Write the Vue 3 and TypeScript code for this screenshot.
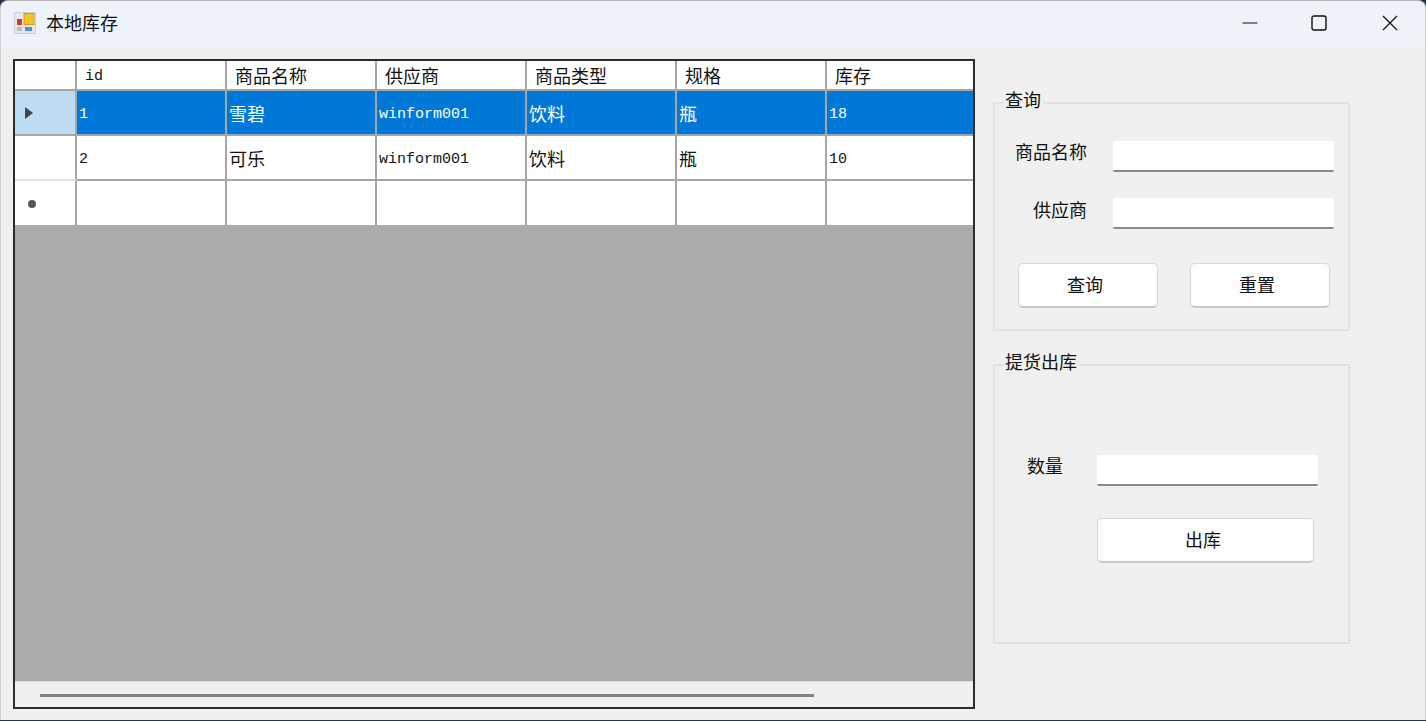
<script setup lang="ts">
interface Row { id: string; name: string; supplier: string; type: string; spec: string; stock: string }
const headers = ['id', '商品名称', '供应商', '商品类型', '规格', '库存']
const rows: Row[] = [
  { id: '1', name: '雪碧', supplier: 'winform001', type: '饮料', spec: '瓶', stock: '18' },
  { id: '2', name: '可乐', supplier: 'winform001', type: '饮料', spec: '瓶', stock: '10' },
]
</script>

<template>
  <div class="window">
    <header class="titlebar">
      <svg class="app-icon" width="22" height="22" viewBox="0 0 22 22">
        <rect x="0.5" y="0.5" width="21" height="21" fill="#e6e7ea" stroke="#cfd1d6" />
        <rect x="10" y="1.5" width="10" height="11" fill="#f4c526" stroke="#cf9d22" />
        <rect x="3" y="7" width="5" height="6" fill="#cf3a30" />
        <rect x="3" y="15" width="5" height="4" fill="#b9bcc2" />
        <rect x="11" y="15" width="7" height="4" fill="#4c8fe0" />
      </svg>
      <span class="title">本地库存</span>
      <div class="controls">
        <svg class="ctl-min" width="16" height="16" viewBox="0 0 16 16"><path d="M0.5 8h15" stroke="#111" stroke-width="1.2" /></svg>
        <svg class="ctl-max" width="16" height="16" viewBox="0 0 16 16"><rect x="1" y="1" width="14" height="14" rx="2" fill="none" stroke="#111" stroke-width="1.4" /></svg>
        <svg class="ctl-close" width="16" height="16" viewBox="0 0 16 16"><path d="M1 1l14 14M15 1L1 15" stroke="#111" stroke-width="1.2" /></svg>
      </div>
    </header>

    <main class="content">
      <section class="datagrid">
        <div class="grid-table">
          <div class="cell row-head head-cell"></div>
          <div v-for="h in headers" :key="h" class="cell head-cell" :class="{ latin: h === 'id' }">{{ h }}</div>

          <template v-for="(r, i) in rows" :key="r.id">
            <div class="cell row-head" :class="{ 'row-current': i === 0 }">
              <span v-if="i === 0" class="arrow"></span>
            </div>
            <div class="cell latin" :class="{ selected: i === 0 }">{{ r.id }}</div>
            <div class="cell" :class="{ selected: i === 0 }">{{ r.name }}</div>
            <div class="cell latin" :class="{ selected: i === 0 }">{{ r.supplier }}</div>
            <div class="cell" :class="{ selected: i === 0 }">{{ r.type }}</div>
            <div class="cell" :class="{ selected: i === 0 }">{{ r.spec }}</div>
            <div class="cell latin" :class="{ selected: i === 0 }">{{ r.stock }}</div>
          </template>

          <div class="cell row-head last"><span class="star"></span></div>
          <div v-for="n in 6" :key="n" class="cell last"></div>
        </div>
        <div class="grid-empty"></div>
        <div class="hscroll"><div class="thumb"></div></div>
      </section>

      <aside class="side">
        <section class="group group-query">
          <span class="legend">查询</span>
          <div class="field field-name">
            <label class="label">商品名称</label>
            <div class="input"></div>
          </div>
          <div class="field field-supplier">
            <label class="label">供应商</label>
            <div class="input"></div>
          </div>
          <div class="actions">
            <button class="btn">查询</button>
            <button class="btn">重置</button>
          </div>
        </section>

        <section class="group group-out">
          <span class="legend">提货出库</span>
          <div class="field field-qty">
            <label class="label">数量</label>
            <div class="input"></div>
          </div>
          <button class="btn btn-out">出库</button>
        </section>
      </aside>
    </main>
  </div>
</template>

<style>
html, body { margin: 0; background: #22344f; overflow: hidden; }
</style>

<style scoped>
.window {
  width: 1426px;
  height: 720px;
  box-sizing: border-box;
  display: flex;
  flex-direction: column;
  background: #f0f0f0;
  border-top: 1px solid #b4b4b4;
  border-left: 1px solid #d0d0d0;
  border-right: 1px solid #d0d0d0;
  border-radius: 8px 8px 0 0;
  overflow: hidden;
  font-family: "Noto Sans CJK SC", "Liberation Sans", sans-serif;
  color: #111;
  font-size: 18px;
}
.titlebar {
  height: 47px;
  flex: none;
  display: flex;
  align-items: center;
  padding: 0 0 4px 13px;
  background: #eef2f9;
  box-sizing: border-box;
}
.app-icon { flex: none; }
.title { margin: 0 0 2px 10px; line-height: 24px; }
.controls {
  margin-left: auto;
  margin-right: 27px;
  display: flex;
  align-items: center;
}
.ctl-max { margin-left: 53px; }
.ctl-close { margin-left: 55px; }
.content {
  flex: 1;
  display: flex;
  align-items: flex-start;
  padding: 11px 0 0 12px;
  min-height: 0;
}
.datagrid {
  width: 962px;
  height: 650px;
  box-sizing: border-box;
  border: 2px solid #2c2c2c;
  display: flex;
  flex-direction: column;
  flex: none;
  background: #ababab;
}
.grid-table {
  display: grid;
  grid-template-columns: 62px repeat(5, 150px) 1fr;
  grid-template-rows: 30px 45px 45px 44px;
  flex: none;
}
.cell {
  box-sizing: border-box;
  border-right: 2px solid #a6a6a6;
  border-bottom: 2px solid #a6a6a6;
  background: #fff;
  display: flex;
  align-items: center;
  padding-left: 2px;
  line-height: 1;
  white-space: nowrap;
  overflow: hidden;
}
.cell:nth-child(7n) { border-right: none; }
.cell.last { border-bottom: none; }
.head-cell { padding-left: 8px; }
.latin { font-family: "Liberation Mono", monospace; font-size: 15px; padding-top: 4px; }
.latin.head-cell { padding-top: 2px; }
.selected { background: #0078d7; color: #fff; }
.row-head { padding-left: 0; border-bottom-color: #e4e4e4; }
.row-head.head-cell { border-bottom-color: #a6a6a6; }
.row-current { background: #bcdcf4; border-bottom-color: #a6a6a6; }
.arrow {
  margin-left: 10px;
  width: 0;
  height: 0;
  border-top: 6px solid transparent;
  border-bottom: 6px solid transparent;
  border-left: 8px solid #444;
}
.star {
  margin: 2px 0 0 13px;
  width: 8px;
  height: 8px;
  border-radius: 50%;
  background: #555;
}
.grid-empty { flex: 1; background: #ababab; }
.hscroll {
  height: 26px;
  flex: none;
  background: #f0f0f0;
  border-top: 1px solid #dcdcdc;
  box-sizing: border-box;
  padding: 12px 0 0 25px;
}
.thumb { width: 774px; height: 3px; background: #828282; }

.side {
  width: 357px;
  margin-left: 18px;
  margin-top: 43px;
  flex: none;
  display: flex;
  flex-direction: column;
  gap: 33px;
}
.group {
  position: relative;
  box-sizing: border-box;
  border: 2px solid #e3e3e3;
  display: flex;
  flex-direction: column;
}
.group-query { height: 229px; padding: 37px 14px 0 21px; }
.group-out { height: 280px; padding: 89px 0 0 32px; }
.legend {
  position: absolute;
  left: 9px;
  top: -17px;
  line-height: 24px;
  padding: 0 2px 0 1px;
  background: #f0f0f0;
}
.field { display: flex; }
.field-name { height: 31px; margin-bottom: 26px; justify-content: space-between; }
.field-supplier { height: 31px; justify-content: flex-end; }
.field-name .label { margin: -2px 0 0 -1px; }
.field-supplier .label { margin: -1px 26px 0 0; }
.field-qty { height: 31px; gap: 34px; }
.field-qty .label { margin-top: -2px; }
.label { line-height: 24px; }
.input {
  width: 221px;
  height: 31px;
  box-sizing: border-box;
  background: #fff;
  border-bottom: 2px solid #8a8a8a;
  border-radius: 2px;
}
.actions { margin: 34px 0 0 2px; display: flex; gap: 32px; }
.btn {
  width: 140px;
  height: 45px;
  box-sizing: border-box;
  background: #fdfdfd;
  border: 1px solid #d8d8d8;
  border-bottom: 2px solid #c8c8c8;
  border-radius: 5px;
  font: inherit;
  color: #111;
  padding: 0 6px 3px 0;
}
.btn-out { width: 217px; margin: 32px 0 0 70px; padding-right: 5px; }
</style>
